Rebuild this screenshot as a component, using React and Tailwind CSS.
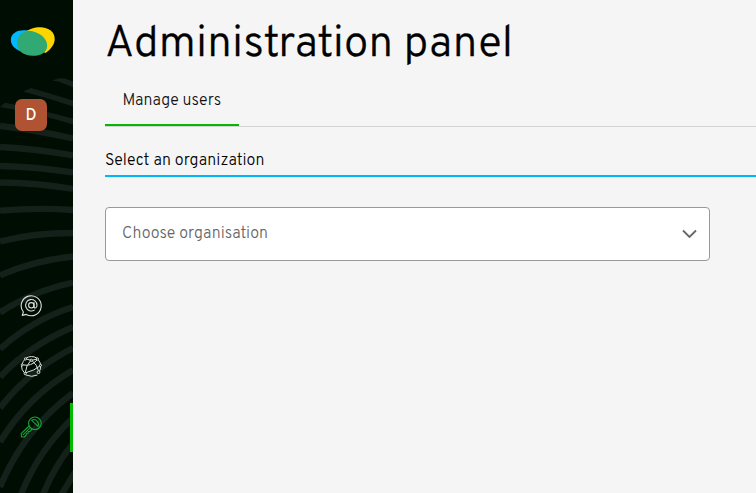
import React from "react";

const STRIPES = [
  "M0 126Q36 130 73 138.500",
  "M0 147Q37 149 73 155.500",
  "M0 166Q37 167 73 172.500",
  "M0 182.500Q37 183 73 189",
  "M0 210.700Q37 207.500 73 210",
  "M0 241.500Q33 233 73 233",
  "M0 275.500Q33 260.500 73 256.500",
  "M0 312.500Q33 291 73 282.500",
  "M0 349Q32 320 73 307",
  "M0 377Q30 345 73 327",
  "M0 408Q28 371 73 348",
  "M0 442Q27 397 73 370",
  "M0 487Q24 429 73 393",
  "M20 497Q38 450 75 416",
  "M42 497Q54 466 75 441",
  "M60 497L75 472",
];

function Pattern() {
  return (
    <svg className="absolute inset-0" width="73" height="493" viewBox="0 0 73 493" fill="none">
      <g fill="#14201a">
        <path d="M52 80.500L59 78.300L65 78.600L73 81.500V87.500L65 84L59 81.700Z" />
        <path d="M23 91.500L31 88Q52 94 73 100.500V106.500Q48 98 23 91.500Z" />
        <path d="M0 107L5 102.700Q38 109 73 118.500V124.500Q36 113 0 107Z" />
      </g>
      <g stroke="#14201a" strokeWidth="6.300">
        {STRIPES.map((d) => (
          <path key={d} d={d} />
        ))}
      </g>
    </svg>
  );
}

function Logo() {
  return (
    <svg width="46" height="30" viewBox="0 0 46 30">
      <path d="M.8 14C.8 7 8 3.800 15 4.300C25 4.500 34 10 35 19C35 24 28 27.500 20 27.500C8 26 .8 21 .8 14Z" fill="#00b8ff" />
      <path d="M12 8C18 3 25 1.200 30 1.200C39 1.300 44.700 6 44.700 13C44.700 18 41 23.500 35.500 27Q20 22 12 8Z" fill="#ffd500" />
      <path d="M17.500 4.700C28 4.700 37.200 12 37.200 19.500C37.200 26.500 31 29.800 22.500 29.800C13.500 29.800 7 24.500 7 17.500C7 11 10.500 6 17.500 4.700Z" fill="#31a972" />
    </svg>
  );
}

function AtIcon() {
  return (
    <svg width="23" height="24" viewBox="0 0 23 24" fill="none" stroke="#dce0dd" strokeWidth="1.100" strokeLinecap="round" strokeLinejoin="round">
      <path d="M3.400 18A10 10 0 1 1 6.200 20.400L2.200 21.400Z" />
      <circle cx="11.300" cy="11.300" r="2.700" />
      <path d="M14 8.500V12.500C14 14.900 17 14.300 17 11.300A5.700 5.700 0 1 0 14.300 16.100" />
    </svg>
  );
}

function NetworkIcon() {
  return (
    <svg width="23" height="23" viewBox="0 0 23 23" fill="none" stroke="#dce0dd" strokeWidth="1" strokeLinejoin="round">
      <path d="M6 3.200Q11.500 -.200 17 3.200M18.400 5Q20 7 20.600 9.300M20.600 11.600Q20.800 14 19.600 15.800M17.400 20Q11.600 22.600 6 20M4.600 18Q1.400 15 1.500 11M2.300 8.900Q3 6.300 4.600 4.700" />
      <path d="M6.500 4L10.200 5.200M12.400 5.200L16.300 4.200M10.500 5.800Q6.200 10 5.300 17.600M3.300 9.900Q7.500 10.800 10.500 9.600M12.300 5.900Q17 9.500 18.400 15.600M6 17.700Q14.500 15.500 20 10.900M10.500 9.600Q14 8.500 17 5" />
      <circle cx="5.500" cy="3.900" r="1.100" />
      <circle cx="17.400" cy="4" r="1.100" />
      <circle cx="11.300" cy="5.200" r="1.100" />
      <circle cx="2.200" cy="9.900" r="1" />
      <circle cx="20.500" cy="10.400" r="1" />
      <circle cx="5.200" cy="18.700" r="1.100" />
      <circle cx="18.500" cy="17.200" r="1.400" />
    </svg>
  );
}

function KeyIcon() {
  return (
    <svg width="23" height="23" viewBox="0 0 23 23" fill="none" stroke="#14a536" strokeWidth="1.100" strokeLinejoin="round">
      <circle cx="14.900" cy="7.300" r="6.300" />
      <path d="M11.700 4.300Q14 2.500 16.800 4.800Q19.300 7.200 18.100 10.300Z" />
      <path d="M9 10L1.200 17.600L1.500 20.900L4.300 21L6.200 19L6.500 17.500L8 17.200L8.300 15.600L9.800 15.400L12.200 13" />
      <path d="M10.300 11.700L2.800 19.200" />
    </svg>
  );
}

function Sidebar() {
  return (
    <aside className="relative h-full w-[73px] shrink-0 overflow-hidden bg-[#000d02]">
      <Pattern />
      <div className="relative flex h-full flex-col">
        <div className="pt-[26px] pl-[10px]">
          <Logo />
        </div>
        <div className="mt-[43px] ml-[15px] flex h-8 w-8 shrink-0 items-center justify-center rounded-[7px] bg-[#b05332] pt-0.5 text-base font-medium text-white">
          D
        </div>
        <nav className="mt-[150px] flex flex-col">
          <a className="flex h-[49px] items-center pl-[20px]"><AtIcon /></a>
          <a className="mt-3 flex h-[49px] items-center pl-[20px]"><NetworkIcon /></a>
          <a className="mt-3 flex h-[49px] items-center border-r-[3px] border-[#00b900] pl-[20px]"><KeyIcon /></a>
        </nav>
      </div>
    </aside>
  );
}

export default function App() {
  return (
    <div className="flex h-screen w-full overflow-hidden bg-[#f5f5f5] font-['Overpass','Roboto',sans-serif] font-light text-black">
      <Sidebar />
      <main className="min-w-0 flex-1 pl-8">
        <h1 className="h-[82px] pt-[20px] text-[44px] leading-[50px] tracking-[0.18px] whitespace-nowrap [-webkit-text-stroke:0.3px_black]">Administration panel</h1>
        <div className="flex h-[45px] border-b border-[#d4d4d4]">
          <div className="h-[44px] w-[134px] border-b-2 border-[#00b900] pt-[7px] pl-[17.5px] text-base leading-6 tracking-[0.06px] whitespace-nowrap text-[#111]">Manage users</div>
        </div>
        <h2 className="h-[50px] border-b-2 border-[#00b8f5] pt-[22px] text-base leading-6 tracking-[0.08px]">Select an organization</h2>
        <div className="mt-[30px] flex h-[54px] w-[605px] items-center justify-between rounded border border-[#999] bg-white pr-3 pl-4 text-[#666]">
          <span className="text-base leading-6 tracking-[0.08px]">Choose organisation</span>
          <svg width="15" height="10" viewBox="0 0 15 10" fill="none" stroke="#666" strokeWidth="1.800">
            <path d="M1 1.500L7.500 8L14 1.500" />
          </svg>
        </div>
      </main>
    </div>
  );
}
